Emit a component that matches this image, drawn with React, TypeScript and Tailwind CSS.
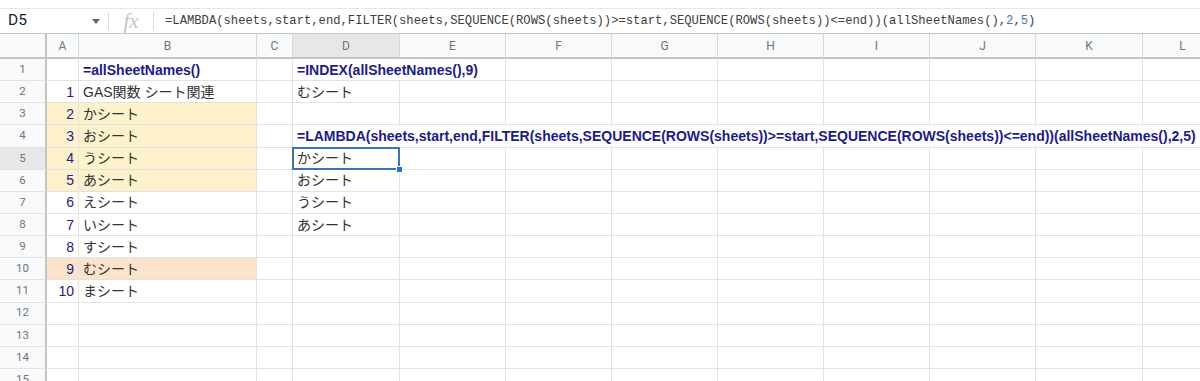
import React from "react";

type Cell = {
  text?: string;
  kind?: "formula" | "num" | "text";
  span?: number;
  bg?: string;
  selected?: boolean;
};

const COLUMNS = ["A", "B", "C", "D", "E", "F", "G", "H", "I", "J", "K", "L"];

const FORMULA =
  "=LAMBDA(sheets,start,end,FILTER(sheets,SEQUENCE(ROWS(sheets))>=start,SEQUENCE(ROWS(sheets))<=end))(allSheetNames(),";

const YELLOW = "bg-[#fef2cd]";
const ORANGE = "bg-[#fce4cc]";

// row -> column index (0 = A) -> cell
const data: Record<number, Record<number, Cell>> = {
  1: {
    1: { text: "=allSheetNames()", kind: "formula" },
    3: { text: "=INDEX(allSheetNames(),9)", kind: "formula", span: 2 },
  },
  2: {
    0: { text: "1", kind: "num" },
    1: { text: "GAS関数 シート関連" },
    3: { text: "むシート" },
  },
  3: {
    0: { text: "2", kind: "num", bg: YELLOW },
    1: { text: "かシート", bg: YELLOW },
  },
  4: {
    0: { text: "3", kind: "num", bg: YELLOW },
    1: { text: "おシート", bg: YELLOW },
    3: { text: FORMULA + "2,5)", kind: "formula", span: 9 },
  },
  5: {
    0: { text: "4", kind: "num", bg: YELLOW },
    1: { text: "うシート", bg: YELLOW },
    3: { text: "かシート", selected: true },
  },
  6: {
    0: { text: "5", kind: "num", bg: YELLOW },
    1: { text: "あシート", bg: YELLOW },
    3: { text: "おシート" },
  },
  7: {
    0: { text: "6", kind: "num" },
    1: { text: "えシート" },
    3: { text: "うシート" },
  },
  8: {
    0: { text: "7", kind: "num" },
    1: { text: "いシート" },
    3: { text: "あシート" },
  },
  9: {
    0: { text: "8", kind: "num" },
    1: { text: "すシート" },
  },
  10: {
    0: { text: "9", kind: "num", bg: ORANGE },
    1: { text: "むシート", bg: ORANGE },
  },
  11: {
    0: { text: "10", kind: "num" },
    1: { text: "まシート" },
  },
};

const cellFont = { fontFamily: '"Liberation Sans", "Noto Sans CJK JP", sans-serif' };

function GridRow({ row }: { row: number }) {
  const cells = data[row] ?? {};
  const out: React.ReactNode[] = [];
  let c = 0;
  while (c < COLUMNS.length) {
    const cell = cells[c];
    const span = cell?.span ?? 1;
    const color =
      cell?.kind === "formula"
        ? "font-bold text-[#1b1b8a]"
        : cell?.kind === "num"
        ? "justify-end text-[#23237f]"
        : "text-[#333333]";
    out.push(
      <div
        key={c}
        style={{ gridColumn: `span ${span} / span ${span}`, ...cellFont }}
        className={`relative flex h-[22.15px] items-center whitespace-nowrap border-r border-b border-[#e2e2e2] px-[4px] text-[14px] leading-none ${
          cell?.bg ?? "bg-white"
        } ${color} ${cell?.selected ? "z-10" : ""}`}
      >
        {cell?.text}
        {cell?.selected && (
          <>
            <div className="pointer-events-none absolute -left-px -top-px right-[-1px] bottom-[-1px] border-2 border-[#3d72b4]" />
            <div className="absolute bottom-[-4px] right-[-4px] h-[7px] w-[7px] border border-white bg-[#1a73e8]" />
          </>
        )}
      </div>
    );
    c += span;
  }
  return (
    <>
      <div
        className={`flex h-[22.15px] items-center justify-center border-r-2 border-b border-r-[#c4c4c4] border-b-[#e2e2e2] text-[11.5px] text-[#70757a] ${
          row === 5 ? "bg-[#e6e7e9]" : "bg-[#f8f9fa]"
        }`}
        style={{ fontFamily: "Roboto, sans-serif" }}
      >
        {row}
      </div>
      {out}
    </>
  );
}

export default function App() {
  const rows = Array.from({ length: 15 }, (_, i) => i + 1);

  return (
    <div className="h-[381px] w-[1200px] overflow-hidden bg-white">
      <div className="h-[9px] border-b border-[#e6e6e6]" />

      {/* formula bar */}
      <div className="flex h-[25px] items-center border-b border-[#c8c8c8]">
        <div
          className="flex w-[108px] items-center justify-between pl-[8px] pr-[8px] text-[15.5px] text-[#202124]"
          style={{ fontFamily: "Roboto, sans-serif" }}
        >
          <span>D5</span>
          <svg width="8" height="5" viewBox="0 0 8 5" className="mt-[1px]">
            <path d="M0 0h8L4 5z" fill="#5f6368" />
          </svg>
        </div>
        <div className="h-[18px] w-px bg-[#dadce0]" />
        <div
          className="w-[44px] text-center text-[21px] leading-none italic text-[#c2c4c7]"
          style={{ fontFamily: '"Liberation Serif", serif' }}
        >
          fx
        </div>
        <div className="h-[18px] w-px bg-[#dadce0]" />
        <div
          className="pl-[11px] text-[12.2px] whitespace-nowrap text-[#3c4043]"
          style={{ fontFamily: '"Liberation Mono", monospace' }}
        >
          {FORMULA}
          <span className="text-[#3f76b5]">2</span>,<span className="text-[#3f76b5]">5</span>)
        </div>
      </div>

      {/* grid */}
      <div className="grid grid-cols-[47px_32px_178px_36px_107px_106px_106px_106px_106px_106px_106px_107px_80px]">
        <div className="h-[25px] border-r-2 border-b-2 border-[#c4c4c4] bg-[#f8f9fa]" />
        {COLUMNS.map((col, i) => (
          <div
            key={i}
            className={`flex h-[25px] items-center justify-center border-r border-b-2 border-r-[#d9d9d9] border-b-[#c4c4c4] text-[12px] text-[#70757a] ${
              col === "D" ? "bg-[#e6e7e9]" : "bg-[#f8f9fa]"
            }`}
            style={{ fontFamily: "Roboto, sans-serif" }}
          >
            {col}
          </div>
        ))}
        {rows.map((r) => (
          <GridRow key={r} row={r} />
        ))}
      </div>
    </div>
  );
}
